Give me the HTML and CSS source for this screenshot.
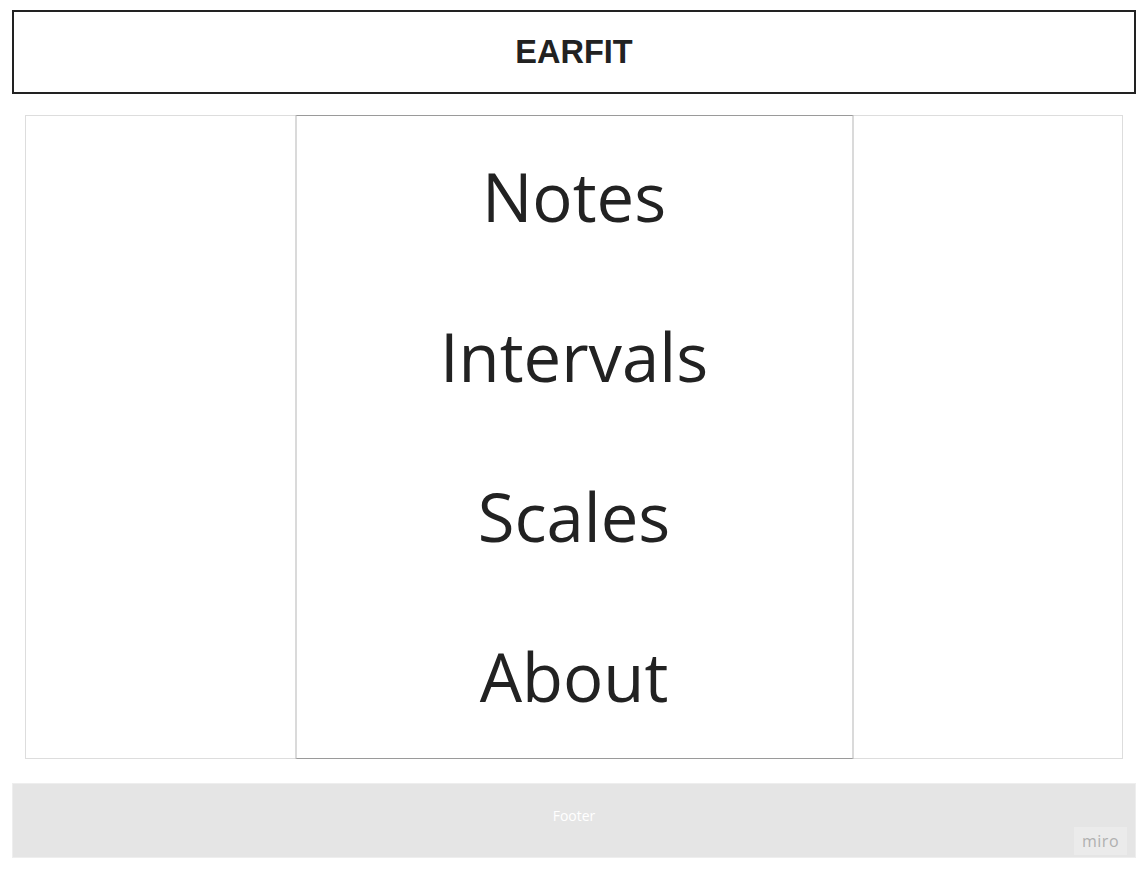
FILE: index.html
```html
<!DOCTYPE html>
<html>
<head>
<meta charset="utf-8">
<link rel="stylesheet" href="styles.css">
</head>
<body>
<div class="page">
  <header class="header">EARFIT</header>
  <main class="main">
    <nav class="menu">
      <div class="item">Notes</div>
      <div class="item">Intervals</div>
      <div class="item">Scales</div>
      <div class="item">About</div>
    </nav>
  </main>
  <footer class="footer">
    <span class="footer-text">Footer</span>
    <span class="miro">miro</span>
  </footer>
</div>
</body>
</html>
```
FILE: styles.css
```css
html, body {
  margin: 0;
  padding: 0;
  background: #ffffff;
}
.page {
  width: 1124px;
  padding: 10px 0 0 12px;
  display: flex;
  flex-direction: column;
}
.header {
  box-sizing: border-box;
  height: 84px;
  border: 2px solid #222222;
  display: flex;
  align-items: center;
  justify-content: center;
  font-family: "Liberation Sans", Arial, sans-serif;
  font-weight: bold;
  font-size: 32.5px;
  color: #222222;
}
.main {
  box-sizing: border-box;
  margin: 21px 13px 0 13px;
  height: 644px;
  border: 1px solid #dddddd;
  display: flex;
  justify-content: center;
}
.menu {
  box-sizing: border-box;
  width: 559px;
  margin-top: -1px;
  margin-bottom: -1px;
  border-top: 1px solid #9a9a9a;
  border-bottom: 1px solid #9a9a9a;
  border-left: 2px solid #dadada;
  border-right: 2px solid #dadada;
  display: grid;
  grid-template-rows: repeat(4, 160px);
  align-content: start;
}
.item {
  font-family: "Open Sans", sans-serif;
  font-size: 67px;
  line-height: 160px;
  color: #222222;
  text-align: center;
}
.footer {
  position: relative;
  box-sizing: border-box;
  margin-top: 24px;
  height: 75px;
  background: #e5e5e5;
  border: 1px solid #eeeeee;
  display: flex;
  align-items: center;
  justify-content: center;
}
.footer-text {
  font-family: "Open Sans", sans-serif;
  font-size: 14px;
  color: #ffffff;
  margin-top: -10px;
}
.miro {
  position: absolute;
  right: 8px;
  bottom: 2px;
  width: 53px;
  height: 28px;
  background: #ebebeb;
  font-family: "Open Sans", sans-serif;
  font-size: 16px;
  letter-spacing: 0.5px;
  color: #b0b0b0;
  display: flex;
  align-items: center;
  justify-content: center;
}
```
